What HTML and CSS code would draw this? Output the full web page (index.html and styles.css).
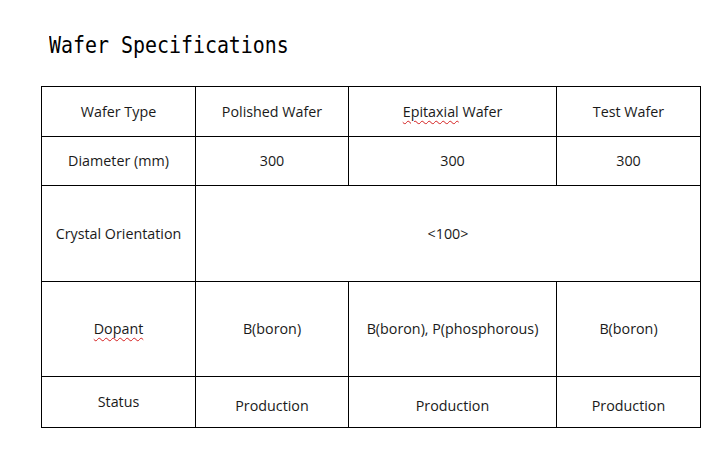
FILE: index.html
```html
<!DOCTYPE html>
<html>
<head>
<meta charset="utf-8">
<link rel="stylesheet" href="styles.css">
</head>
<body>
<h1 class="title"><span class="title-text">Wafer Specifications</span></h1>
<table class="spec">
  <colgroup>
    <col class="c1"><col class="c2"><col class="c3"><col class="c4">
  </colgroup>
  <tr class="r1">
    <td>Wafer Type</td><td>Polished Wafer</td><td><span class="spell">Epitaxial</span> Wafer</td><td>Test Wafer</td>
  </tr>
  <tr class="r2">
    <td>Diameter (mm)</td><td>300</td><td>300</td><td>300</td>
  </tr>
  <tr class="r3">
    <td>Crystal Orientation</td><td colspan="3">&lt;100&gt;</td>
  </tr>
  <tr class="r4">
    <td><span class="spell">Dopant</span></td><td>B(boron)</td><td>B(boron), P(phosphorous)</td><td>B(boron)</td>
  </tr>
  <tr class="r5">
    <td>Status</td><td class="low">Production</td><td class="low">Production</td><td class="low">Production</td>
  </tr>
</table>
</body>
</html>
```
FILE: styles.css
```css
html, body {
  margin: 0;
  background: #fff;
}
body {
  padding: 31px 0 0 41px;
  font-family: "Open Sans", "Noto Sans", sans-serif;
  color: #1a1a1a;
}
.title {
  margin: 0 0 0 8px;
  font-family: "DejaVu Sans Mono", monospace;
  font-weight: normal;
  font-size: 23px;
  line-height: 28px;
  height: 55px;
  color: #000;
}
.title-text {
  display: inline-block;
  transform: scaleX(0.866);
  transform-origin: left center;
  white-space: nowrap;
}
.spec {
  border-collapse: collapse;
  table-layout: fixed;
  width: 659px;
}
.c1 { width: 154px; }
.c2 { width: 153px; }
.c3 { width: 208px; }
.c4 { width: 144px; }
.spec td {
  border: 1px solid #000;
  padding: 0;
  text-align: center;
  vertical-align: middle;
  font-size: 14.3px;
  line-height: 18px;
}
.r1 td { height: 49px; }
.r2 td { height: 48px; }
.r3 td { height: 95px; }
.r4 td { height: 94px; }
.r5 td { height: 50px; }
.r5 td.low { padding-top: 8px; height: 42px; }
.spell {
  text-decoration: underline wavy #d42020;
  text-decoration-thickness: 1px;
  text-underline-offset: 3px;
}
```
